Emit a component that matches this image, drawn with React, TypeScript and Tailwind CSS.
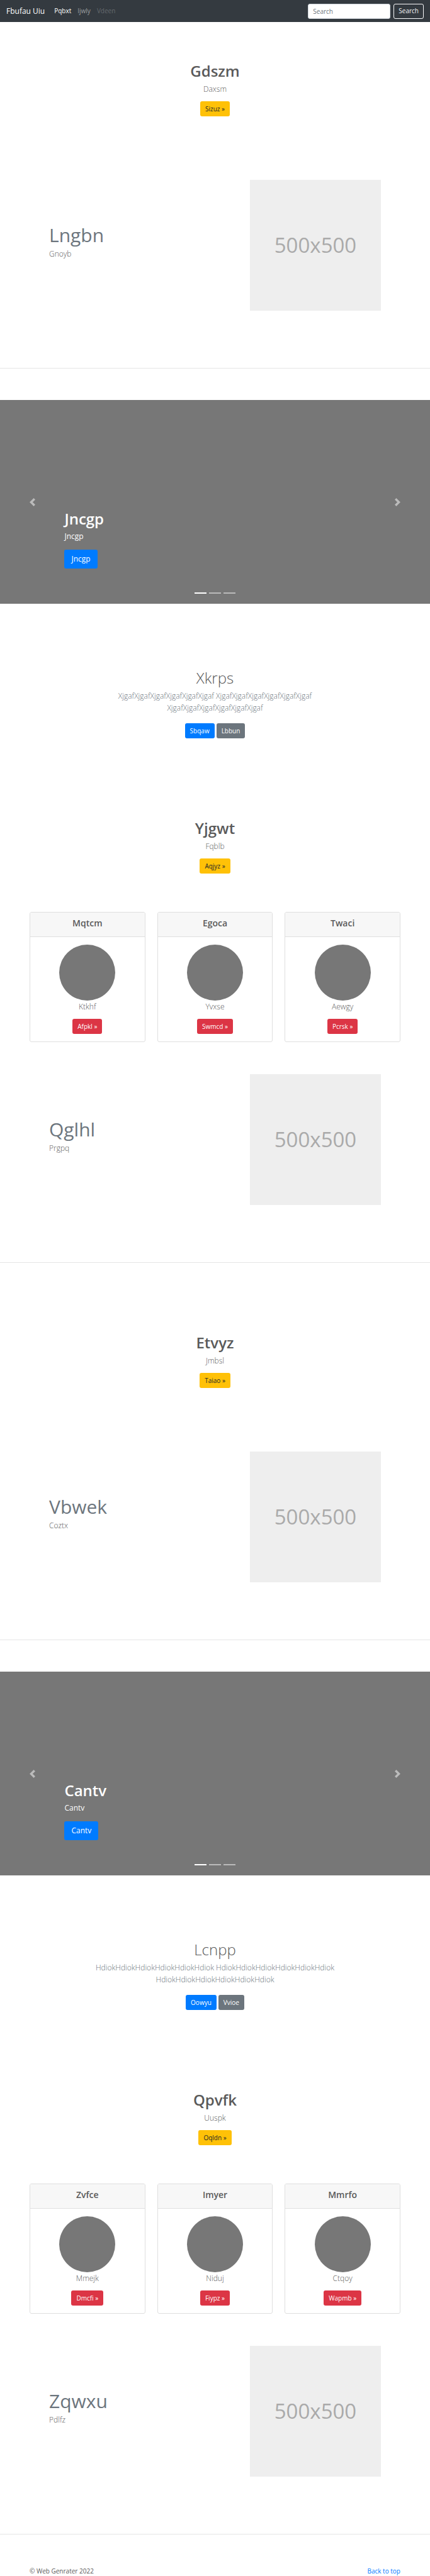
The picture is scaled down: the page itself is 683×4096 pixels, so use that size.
import type { ReactNode } from "react";

type ButtonTone = "primary" | "secondary" | "warning" | "danger";

const tones: Record<ButtonTone, string> = {
  primary: "bg-[#007bff] text-white",
  secondary: "bg-[#6c757d] text-white",
  warning: "bg-[#ffc107] text-[#212529]",
  danger: "bg-[#dc3545] text-white",
};

function ButtonLink({ tone, children }: { tone: ButtonTone; children: ReactNode }) {
  return (
    <a
      href="#"
      className={`inline-flex h-6 items-center rounded-[3px] px-2 text-[10px] leading-[15px] ${tones[tone]}`}
    >
      {children}
    </a>
  );
}

function Navbar() {
  return (
    <nav className="flex h-[35px] items-center bg-[#343a40] px-[10px] text-[10px] leading-[15px]">
      <a href="#" className="mr-[15px] text-[12px] text-white">
        Fbufau Uiu
      </a>
      <ul className="flex gap-[10px]">
        <li>
          <a href="#" className="text-white">
            Pqbxt
          </a>
        </li>
        <li>
          <a href="#" className="text-white/50">
            Ijwly
          </a>
        </li>
        <li>
          <a href="#" aria-disabled="true" className="text-white/25">
            Vdeen
          </a>
        </li>
      </ul>
      <form className="ml-auto flex gap-[5px]">
        <input
          type="search"
          placeholder="Search"
          aria-label="Search"
          className="h-6 w-[131px] rounded-[3px] border border-[#ced4da] bg-white px-[7px] text-[#495057] placeholder:text-[#6c757d]"
        />
        <button type="button" className="h-6 rounded-[3px] border border-[#f8f9fa] px-[7px] text-[#f8f9fa]">
          Search
        </button>
      </form>
    </nav>
  );
}

function Hero({ title, text, action }: { title: string; text: string; action: string }) {
  return (
    <header className="flex flex-col items-center text-center">
      <h2 className="mb-[2px] text-[24px] leading-[34px] font-semibold">{title}</h2>
      <p className="mb-[10px] text-[12px] leading-[19px] font-light">{text}</p>
      <ButtonLink tone="warning">{action} »</ButtonLink>
    </header>
  );
}

function Featurette({ title, text }: { title: string; text: string }) {
  return (
    <section className="flex items-start justify-between border-b border-[#e5e5e5] px-[78px] pb-[91px]">
      <div className="pt-[71px]">
        <h2 className="mb-[3px] text-[30px] leading-[34px] text-[#6c757d]">{title}</h2>
        <p className="text-[12px] leading-[19px] font-light">{text}</p>
      </div>
      <div
        role="img"
        aria-label="Placeholder"
        className="flex size-52 items-center justify-center bg-[#eeeeee] text-[33px] text-[#aaaaaa]"
      >
        500x500
      </div>
    </section>
  );
}

function Carousel({ label }: { label: string }) {
  return (
    <section className="relative flex h-[324px] flex-col items-start justify-end bg-[#777777] px-[15%] pb-14 text-white">
      <h1 className="mb-[2px] text-[24px] leading-[34px] font-semibold">{label}</h1>
      <p className="mb-3 text-[12px] leading-[18px]">{label}</p>
      <a
        href="#"
        className="flex h-[30px] items-center rounded-[3px] bg-[#007bff] px-[11px] text-[12px] leading-[18px]"
      >
        {label}
      </a>
      <button
        type="button"
        aria-label="Previous"
        className="absolute inset-y-0 left-0 flex w-[15%] items-center justify-center opacity-50"
      >
        <svg viewBox="0 0 8 8" className="size-[13px] fill-white">
          <path d="M5.25 0l-4 4 4 4 1.5-1.5-2.5-2.5 2.5-2.5-1.5-1.5z" />
        </svg>
      </button>
      <button
        type="button"
        aria-label="Next"
        className="absolute inset-y-0 right-0 flex w-[15%] items-center justify-center opacity-50"
      >
        <svg viewBox="0 0 8 8" className="size-[13px] fill-white">
          <path d="M2.75 0l-1.5 1.5 2.5 2.5-2.5 2.5 1.5 1.5 4-4-4-4z" />
        </svg>
      </button>
      <ol className="absolute inset-x-0 bottom-4 flex justify-center gap-1">
        <li className="h-0.5 w-[19px] bg-white" />
        <li className="h-0.5 w-[19px] bg-white/50" />
        <li className="h-0.5 w-[19px] bg-white/50" />
      </ol>
    </section>
  );
}

function Pitch({ title, text, actions }: { title: string; text: string; actions: [string, string] }) {
  return (
    <section className="flex flex-col items-center pt-[101px] pb-[126px] text-center">
      <h1 className="mb-[2px] text-[24px] leading-[34px] font-light">{title}</h1>
      <p className="mb-[15px] max-w-[430px] text-[12px] leading-[19px] font-light text-[#6c757d]">{text}</p>
      <div className="flex gap-[3px]">
        <ButtonLink tone="primary">{actions[0]}</ButtonLink>
        <ButtonLink tone="secondary">{actions[1]}</ButtonLink>
      </div>
    </section>
  );
}

type CardData = { title: string; text: string; action: string };

function Cards({ items }: { items: CardData[] }) {
  return (
    <section className="grid grid-cols-3 gap-[19px] px-[47px] pt-[61px] pb-[51px]">
      {items.map((item) => (
        <article key={item.title} className="overflow-hidden rounded-[3px] border border-[#dfdfdf] text-center">
          <h4 className="border-b border-[#dfdfdf] bg-[#f7f7f7] pt-2 pb-3 text-[14px] leading-[18px] font-semibold">
            {item.title}
          </h4>
          <div className="flex flex-col items-center py-3">
            <div className="size-[89px] rounded-full bg-[#777777]" />
            <p className="mb-[10px] text-[12px] leading-[19px] font-light">{item.text}</p>
            <ButtonLink tone="danger">{item.action} »</ButtonLink>
          </div>
        </article>
      ))}
    </section>
  );
}

const firstCards: CardData[] = [
  { title: "Mqtcm", text: "Ktkhf", action: "Afpkl" },
  { title: "Egoca", text: "Yvxse", action: "Swmcd" },
  { title: "Twaci", text: "Aewgy", action: "Pcrsk" },
];

const secondCards: CardData[] = [
  { title: "Zvfce", text: "Mmejk", action: "Dmcfi" },
  { title: "Imyer", text: "Niduj", action: "Fiypz" },
  { title: "Mmrfo", text: "Ctqoy", action: "Wapmb" },
];

export default function App() {
  return (
    <div className="bg-white font-['Open_Sans','Noto_Sans',sans-serif] text-[#5a5a5a]">
      <Navbar />
      <main>
        <div className="pt-[61px] pb-[101px]">
          <Hero title="Gdszm" text="Daxsm" action="Sizuz" />
        </div>
        <Featurette title="Lngbn" text="Gnoyb" />
        <div className="pt-[50px]">
          <Carousel label="Jncgp" />
        </div>
        <Pitch
          title="Xkrps"
          text="XjgafXjgafXjgafXjgafXjgafXjgaf XjgafXjgafXjgafXjgafXjgafXjgaf XjgafXjgafXjgafXjgafXjgafXjgaf"
          actions={["Sbqaw", "Lbbun"]}
        />
        <Hero title="Yjgwt" text="Fqblb" action="Aqjyz" />
        <Cards items={firstCards} />
        <Featurette title="Qglhl" text="Prgpq" />
        <div className="pt-[110px] pb-[101px]">
          <Hero title="Etvyz" text="Jmbsl" action="Taiao" />
        </div>
        <Featurette title="Vbwek" text="Coztx" />
        <div className="pt-[50px]">
          <Carousel label="Cantv" />
        </div>
        <Pitch
          title="Lcnpp"
          text="HdiokHdiokHdiokHdiokHdiokHdiok HdiokHdiokHdiokHdiokHdiokHdiok HdiokHdiokHdiokHdiokHdiokHdiok"
          actions={["Oowyu", "Vvioe"]}
        />
        <Hero title="Qpvfk" text="Uuspk" action="Oqldn" />
        <Cards items={secondCards} />
        <Featurette title="Zqwxu" text="Pdlfz" />
      </main>
      <footer className="flex justify-between px-[47px] pt-[51px] text-[10px] leading-[15px]">
        <p>© Web Genrater 2022</p>
        <a href="#" className="text-[#007bff]">
          Back to top
        </a>
      </footer>
    </div>
  );
}
